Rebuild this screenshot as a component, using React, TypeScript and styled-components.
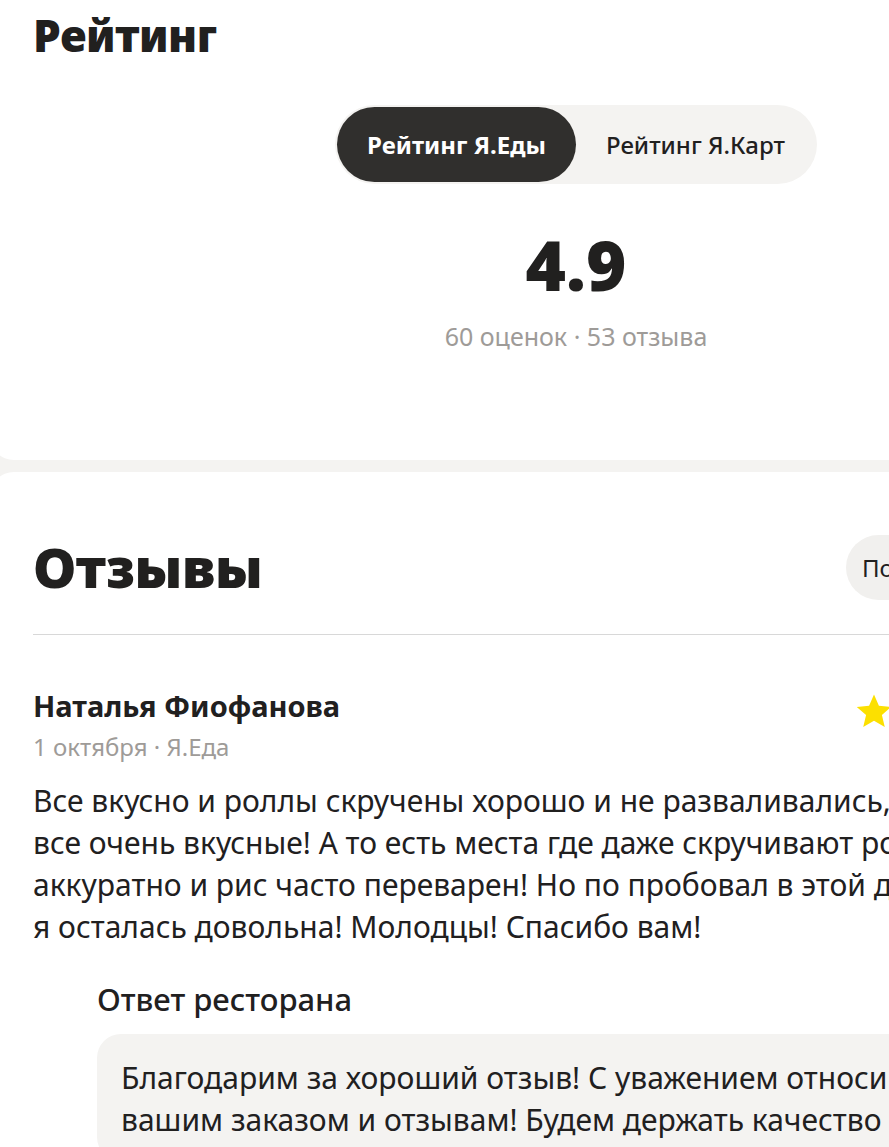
import styled, { createGlobalStyle } from "styled-components";

const GlobalStyle = createGlobalStyle`
  html, body {
    margin: 0;
    padding: 0;
    background: #f4f3f1;
    overflow: hidden;
  }
  body {
    font-family: "Noto Sans", "Liberation Sans", sans-serif;
    color: #21201f;
  }
`;

// Layout
const Page = styled.div`
  width: 889px;
  overflow: hidden;
`;

const Column = styled.div`
  width: 1172px;
  margin-left: -10px;
  display: flex;
  flex-direction: column;
  gap: 12px;
`;

const RatingCard = styled.section`
  height: 460px;
  box-sizing: border-box;
  padding: 9px 43px 0;
  background: #fff;
  border-radius: 0 0 24px 24px;
  display: flex;
  flex-direction: column;
`;

const ReviewsCard = styled.section`
  box-sizing: border-box;
  min-height: 700px;
  padding: 60px 43px 0;
  background: #fff;
  border-radius: 24px 24px 0 0;
`;

const PageTitle = styled.h2<{ $size: number }>`
  margin: 0;
  font-size: ${(p) => p.$size}px;
  line-height: 1.2;
  font-weight: 900;
  letter-spacing: -0.5px;
`;

// Rating
const Toggle = styled.div`
  align-self: center;
  margin-top: 43px;
  display: flex;
  padding: 2px;
  border-radius: 40px;
  background: #f4f3f1;
`;

const ToggleItem = styled.button<{ $active?: boolean }>`
  height: 75px;
  padding: 0 30px;
  border: none;
  border-radius: 38px;
  font-family: inherit;
  font-size: 24px;
  font-weight: ${(p) => (p.$active ? 700 : 500)};
  color: ${(p) => (p.$active ? "#fff" : "#21201f")};
  background: ${(p) => (p.$active ? "#302f2d" : "transparent")};
  cursor: pointer;
`;

const Score = styled.div`
  margin-top: 46px;
  text-align: center;
  font-size: 69px;
  line-height: 69px;
  font-weight: 900;
`;

const Counts = styled.div`
  margin-top: 21px;
  text-align: center;
  font-size: 25px;
  line-height: 32px;
  color: #9e9b98;
`;

// Reviews
const ReviewsHeader = styled.div`
  display: flex;
  align-items: center;
  justify-content: space-between;
  padding: 2px 0 34px;
  border-bottom: 1px solid #d8d8d8;
`;

const SortButton = styled.button`
  width: 273px;
  height: 65px;
  padding: 0 16px;
  border: none;
  border-radius: 33px;
  background: #f1f0ee;
  font-family: inherit;
  font-size: 24px;
  color: #21201f;
  text-align: left;
`;

const Review = styled.article`
  padding-top: 53px;
`;

const ReviewHead = styled.div`
  display: flex;
  justify-content: space-between;
  align-items: flex-start;
`;

const Author = styled.div`
  font-size: 29px;
  line-height: 36px;
  font-weight: 700;
`;

const Meta = styled.div`
  margin-top: 8px;
  font-size: 24px;
  line-height: 30px;
  color: #9e9b98;
`;

const Stars = styled.div`
  display: flex;
  gap: 6px;
  margin: 4px 50px 0 0;
`;

const ReviewText = styled.p`
  margin: 18px 0 0;
  font-size: 30px;
  line-height: 42px;
  white-space: nowrap;
`;

const Reply = styled.div`
  margin: 34px 0 0 64px;
`;

const ReplyTitle = styled.div`
  font-size: 31px;
  line-height: 34px;
  font-weight: 500;
`;

const ReplyBox = styled.div`
  margin-top: 18px;
  padding: 23px 24px 20px;
  border-radius: 24px;
  background: #f4f3f1;
  font-size: 30px;
  line-height: 42px;
  white-space: nowrap;
`;

const Star = () => (
  <svg width="38" height="38" viewBox="0 0 24 24">
    <path
      d="M12 1.5l3.1 7.2 7.8.7-5.9 5.1 1.8 7.6L12 18.1l-6.8 4 1.8-7.6-5.9-5.1 7.8-.7z"
      fill="#fce000"
    />
  </svg>
);

export default function App() {
  return (
    <Page>
      <GlobalStyle />
      <Column>
        <RatingCard>
          <PageTitle $size={44}>Рейтинг</PageTitle>
          <Toggle>
            <ToggleItem $active>Рейтинг Я.Еды</ToggleItem>
            <ToggleItem>Рейтинг Я.Карт</ToggleItem>
          </Toggle>
          <Score>4.9</Score>
          <Counts>60 оценок · 53 отзыва</Counts>
        </RatingCard>

        <ReviewsCard>
          <ReviewsHeader>
            <PageTitle $size={55}>Отзывы</PageTitle>
            <SortButton>По умолчанию</SortButton>
          </ReviewsHeader>

          <Review>
            <ReviewHead>
              <div>
                <Author>Наталья Фиофанова</Author>
                <Meta>1 октября · Я.Еда</Meta>
              </div>
              <Stars>
                <Star />
                <Star />
                <Star />
                <Star />
                <Star />
              </Stars>
            </ReviewHead>
            <ReviewText>
              Все вкусно и роллы скручены хорошо и не разваливались, роллы
              <br />
              все очень вкусные! А то есть места где даже скручивают роллы не
              <br />
              аккуратно и рис часто переварен! Но по пробовал в этой доставке,
              <br />я осталась довольна! Молодцы! Спасибо вам!
            </ReviewText>
            <Reply>
              <ReplyTitle>Ответ ресторана</ReplyTitle>
              <ReplyBox>
                Благодарим за хороший отзыв! С уважением относимся к каждому
                <br />
                вашим заказом и отзывам! Будем держать качество на высоте!
              </ReplyBox>
            </Reply>
          </Review>
        </ReviewsCard>
      </Column>
    </Page>
  );
}
